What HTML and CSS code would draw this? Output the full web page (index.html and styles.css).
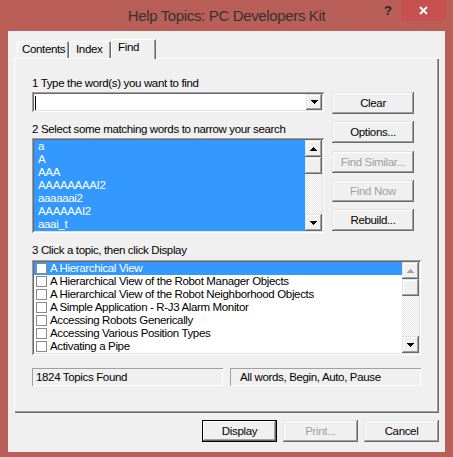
FILE: index.html
```html
<!DOCTYPE html>
<html>
<head>
<meta charset="utf-8">
<link rel="stylesheet" href="styles.css">
</head>
<body>
<div class="window">
  <div class="titlebar">
    <div class="title">Help Topics: PC Developers Kit</div>
    <div class="controls">
      <div class="help">?</div>
      <div class="close"><svg width="9" height="9" viewBox="0 0 9 9"><path d="M1 1L8 8M8 1L1 8" stroke="#fff" stroke-width="1.8"/></svg></div>
    </div>
  </div>
  <div class="client">
    <div class="tabs">
      <div class="tab tab-contents">Contents</div>
      <div class="tab tab-index">Index</div>
      <div class="tab tab-find active">Find</div>
    </div>
    <div class="panel">
      <div class="upper">
        <div class="leftcol">
          <div class="label">1 Type the word(s) you want to find</div>
          <div class="combo sunken">
            <div class="combo-field"><span class="caret"></span></div>
            <div class="sb-btn"><svg class="arrow" width="7" height="4" viewBox="0 0 7 4"><path d="M0 0h7v1H0zM1 1h5v1H1zM2 2h3v1H2zM3 3h1v1H3z" fill="#000"/></svg></div>
          </div>
          <div class="label label2">2 Select some matching words to narrow your search</div>
          <div class="list words sunken">
            <div class="items">
              <div class="item">a</div>
              <div class="item">A</div>
              <div class="item">AAA</div>
              <div class="item">AAAAAAAAI2</div>
              <div class="item">aaaaaai2</div>
              <div class="item">AAAAAAI2</div>
              <div class="item">aaai_t</div>
            </div>
            <div class="sb">
              <div class="sb-btn"><svg class="arrow" width="7" height="4" viewBox="0 0 7 4"><path d="M3 0h1v1H3zM2 1h3v1H2zM1 2h5v1H1zM0 3h7v1H0z" fill="#000"/></svg></div>
              <div class="sb-btn"></div>
              <div class="sb-track"></div>
              <div class="sb-btn"><svg class="arrow" width="7" height="4" viewBox="0 0 7 4"><path d="M0 0h7v1H0zM1 1h5v1H1zM2 2h3v1H2zM3 3h1v1H3z" fill="#000"/></svg></div>
            </div>
          </div>
        </div>
        <div class="btncol">
          <div class="btn">Clear</div>
          <div class="btn">Options...</div>
          <div class="btn disabled">Find Similar...</div>
          <div class="btn disabled">Find Now</div>
          <div class="btn">Rebuild...</div>
        </div>
      </div>
      <div class="label label3">3 Click a topic, then click Display</div>
      <div class="list topics sunken">
        <div class="items">
          <div class="item sel"><span class="cb"></span>A Hierarchical View</div>
          <div class="item"><span class="cb"></span>A Hierarchical View of the Robot Manager Objects</div>
          <div class="item"><span class="cb"></span>A Hierarchical View of the Robot Neighborhood Objects</div>
          <div class="item"><span class="cb"></span>A Simple Application - R-J3 Alarm Monitor</div>
          <div class="item"><span class="cb"></span>Accessing Robots Generically</div>
          <div class="item"><span class="cb"></span>Accessing Various Position Types</div>
          <div class="item"><span class="cb"></span>Activating a Pipe</div>
        </div>
        <div class="sb">
          <div class="sb-btn"><svg class="arrow" width="7" height="4" viewBox="0 0 7 4"><path d="M3 0h1v1H3zM2 1h3v1H2zM1 2h5v1H1zM0 3h7v1H0z" fill="#a0a0a0"/></svg></div>
          <div class="sb-btn"></div>
          <div class="sb-track"></div>
          <div class="sb-btn"><svg class="arrow" width="7" height="4" viewBox="0 0 7 4"><path d="M0 0h7v1H0zM1 1h5v1H1zM2 2h3v1H2zM3 3h1v1H3z" fill="#000"/></svg></div>
        </div>
      </div>
      <div class="status">
        <div class="stat">1824 Topics Found</div>
        <div class="stat stat2">All words, Begin, Auto, Pause</div>
      </div>
    </div>
    <div class="footer">
      <div class="btn default">Display</div>
      <div class="btn disabled">Print...</div>
      <div class="btn">Cancel</div>
    </div>
  </div>
</div>
</body>
</html>
```
FILE: styles.css
```css
* { box-sizing: border-box; margin: 0; padding: 0; }
html, body { width: 453px; height: 457px; overflow: hidden; }
body {
  font-family: "Liberation Sans", Arial, sans-serif;
  font-size: 11.5px;
  letter-spacing: -0.35px;
  color: #000;
}
.window { width: 453px; height: 457px; background: #b95f58; }

.titlebar { height: 31px; display: grid; grid-template-columns: 1fr auto 1fr; }
.title {
  grid-column: 2;
  font-size: 15px;
  letter-spacing: -0.35px;
  line-height: 31px;
  color: #333;
  white-space: nowrap;
}
.controls { grid-column: 3; justify-self: end; display: flex; align-items: flex-start; margin-right: 7px; }
.help { font-weight: bold; font-size: 13px; line-height: 13px; color: #262626; margin: 4px 9px 0 0; letter-spacing: 0; }
.close { width: 45px; height: 21px; background: #c75050; display: flex; align-items: center; justify-content: center; }

.client { margin: 0 8px; height: 421px; background: #f0f0f0; padding: 8px 6px 0 6px; }

.tabs { height: 19px; display: flex; align-items: flex-end; padding-left: 3px; position: relative; z-index: 1; }
.tab {
  height: 17px;
  line-height: 16px;
  padding-left: 5px;
  background: #f0f0f0;
  box-shadow: inset 1px 1px #fff, inset -1px 0 #696969, inset -2px 0 #a0a0a0;
  border-radius: 2px 2px 0 0;
  white-space: nowrap;
}
.tab-contents { width: 52px; }
.tab-index { width: 42px; padding-left: 7px; }
.tab.active { width: 45px; height: 20px; margin-bottom: -1px; line-height: 17px; padding-left: 7px; }

.panel {
  height: 355px;
  box-shadow: inset 1px 1px #fff, inset -1px -1px #696969, inset -2px -2px #a0a0a0;
  padding: 19px 0 0 18px;
}

.upper { display: flex; }
.leftcol { width: 292px; display: flex; flex-direction: column; }
.btncol { width: 82px; margin-left: 8px; padding-top: 15px; display: flex; flex-direction: column; gap: 7.25px; }

.label { height: 13px; line-height: 13px; white-space: nowrap; }
.label2 { margin-top: 11px; }
.label3 { margin-top: 11px; }

.sunken {
  box-shadow: inset 1px 1px #a0a0a0, inset -1px -1px #fff, inset 2px 2px #696969, inset -2px -2px #e3e3e3;
  padding: 2px;
}

.combo { width: 292px; height: 20px; margin-top: 2px; display: flex; background: #fff; }
.combo-field { flex: 1; }
.caret { display: block; width: 1px; height: 14px; background: #000; margin: 2px 0 0 1px; }
.combo .sb-btn { width: 16px; height: 16px; }

.btn, .sb-btn {
  background: #f0f0f0;
  box-shadow: inset -1px -1px #696969, inset 1px 1px #e3e3e3, inset -2px -2px #a0a0a0, inset 2px 2px #fff;
  display: flex;
  align-items: center;
  justify-content: center;
}
.sb-btn { width: 17px; height: 17px; flex: none; }
.arrow { display: block; }
.btn { height: 22px; white-space: nowrap; }
.btn.disabled { color: #a0a0a0; }
.btn.default {
  box-shadow: inset 0 0 0 1px #000, inset -2px -2px #696969, inset 2px 2px #fff, inset -3px -3px #a0a0a0;
}

.list { display: flex; }
.items { flex: 1; min-width: 0; overflow: hidden; }
.item { height: 13px; line-height: 13px; padding-left: 4px; white-space: nowrap; }
.words { width: 292px; height: 95px; margin-top: 2px; background: #3399ff; }
.words .item { color: #fff; }

.sb {
  width: 17px;
  display: flex;
  flex-direction: column;
  background: repeating-conic-gradient(#fff 0 25%, #e6e6e6 0 50%) 0 0 / 2px 2px;
}
.sb-track { flex: 1; }

.topics { width: 389px; height: 95px; margin-top: 3px; background: #fff; }
.topics .item { display: flex; align-items: center; padding-left: 2px; }
.item.sel { background: #3399ff; color: #fff; }
.cb {
  width: 11px;
  height: 11px;
  flex: none;
  background: #fff;
  border: 1px solid #8a8a8a;
  margin-right: 3px;
}

.status { display: flex; gap: 7px; margin-top: 13px; }
.stat {
  width: 191px;
  height: 18px;
  line-height: 18px;
  padding-left: 4px;
  white-space: nowrap;
  box-shadow: inset 1px 1px #a0a0a0, inset -1px -1px #fff;
}
.stat2 { padding-left: 10px; }

.footer { display: flex; justify-content: flex-end; gap: 6px; margin-top: 7px; }
.footer .btn { width: 75px; }
```
